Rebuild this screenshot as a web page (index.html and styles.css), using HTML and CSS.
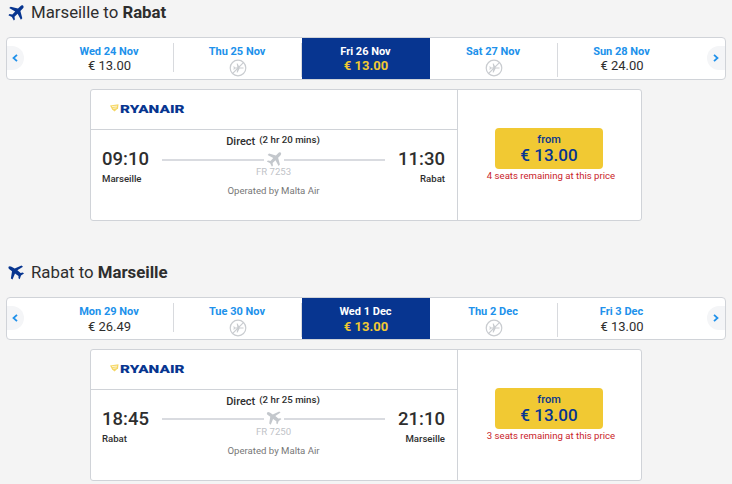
FILE: index.html
```html
<!DOCTYPE html>
<html lang="en">
<head>
    <meta charset="UTF-8">
    <meta name="viewport" content="width=device-width, initial-scale=1.0">
    <title>Select your flights</title>
    <link rel="stylesheet" href="styles.css">
</head>
<body>
    <!-- Shared icons -->
    <svg class="sprite" width="0" height="0">
        <symbol id="plane-out" viewBox="0 0 16 16">
            <path d="M15.200.8c-.8-.8-2-.4-2.800.4L10 3.600 2.700 1.700 1.200 3.100 7.200 6.400 4.300 9.500 1.500 9.100.4 10.200 3.900 12 5.800 15.600 6.900 14.500 6.500 11.700 9.600 8.800 12.900 14.800 14.300 13.300 12.400 6 14.800 3.600C15.600 2.800 16 1.600 15.200.8z"/>
        </symbol>
        <symbol id="plane-back" viewBox="0 0 16 16">
            <path d="M.6 1.800C1.100.9 2.400 1 3.500 1.700L6.700 3.600 13.500.5 15 1.700 9.400 5.300 12.600 8.100 14.800 7.600 16 8.500 13 10.600 11.700 14.200 10.500 13.300 10.500 11 7 8.600 4.500 14.600 2.900 13.400 4 6.200 1.400 4.300C.5 3.500.2 2.600.6 1.800z"/>
        </symbol>
        <symbol id="no-flight" viewBox="0 0 18 18">
            <g fill="none" stroke="#c9ccd0" stroke-width="1.200">
                <circle cx="9" cy="9" r="7.800"/>
                <path d="M3.700 14.400 14.400 3.700"/>
            </g>
            <path fill="#c9ccd0" d="M14.500 8.500 10.600 8.400 8.600 4.600 7.700 4.600 8.400 8.400 6 8.400 5 7.300 4.400 7.300 4.800 9 4.400 10.700 5 10.700 6 9.600 8.400 9.600 7.700 13.400 8.600 13.400 10.600 9.600 14.500 9.500z"/>
        </symbol>
        <symbol id="chevron" viewBox="0 0 6 8">
            <path d="M1 .8 4.500 4 1 7.200" fill="none" stroke="#2091eb" stroke-width="1.800"/>
        </symbol>
    </svg>

    <section class="journey">
        <h1 class="title">
            <svg class="title-icon"><use href="#plane-out"/></svg>
            <span>Marseille to <b>Rabat</b></span>
        </h1>
        <div class="dates">
            <button class="arrow prev"><svg><use href="#chevron"/></svg></button>
            <div class="date divider"><span class="day">Wed 24 Nov</span><span class="price">€ 13.00</span></div>
            <div class="date divider"><span class="day">Thu 25 Nov</span><svg class="none"><use href="#no-flight"/></svg></div>
            <div class="date selected"><span class="day">Fri 26 Nov</span><span class="price">€ 13.00</span></div>
            <div class="date divider"><span class="day">Sat 27 Nov</span><svg class="none"><use href="#no-flight"/></svg></div>
            <div class="date"><span class="day">Sun 28 Nov</span><span class="price">€ 24.00</span></div>
            <button class="arrow next"><svg><use href="#chevron"/></svg></button>
        </div>
        <div class="card">
            <div class="flight">
                <div class="carrier">
                    <svg class="logo" viewBox="0 0 76 12">
                        <path d="M0 2.500 8.500 1.300 8 5.300 4.500 8.500 2 6.200z" fill="#f1c933" opacity=".75"/>
                        <path d="M2 3.600 7 3.200M3.200 5.400 6.500 4.800" stroke="#fff" stroke-width=".7"/>
                        <text class="logo-text" x="10" y="10" textLength="64.500" lengthAdjust="spacingAndGlyphs">RYANAIR</text>
                    </svg>
                </div>
                <div class="details">
                    <div class="stop"><span class="time">09:10</span><span class="city">Marseille</span></div>
                    <div class="route">
                        <div class="duration"><span>Direct</span><small>(2 hr 20 mins)</small></div>
                        <div class="line"><svg><use href="#plane-out"/></svg></div>
                        <div class="number">FR 7253</div>
                        <div class="operator">Operated by Malta Air</div>
                    </div>
                    <div class="stop arrival"><span class="time">11:30</span><span class="city">Rabat</span></div>
                </div>
            </div>
            <div class="fare">
                <button class="buy"><span class="from">from</span><span class="amount">€ 13.00</span></button>
                <div class="seats">4 seats remaining at this price</div>
            </div>
        </div>
    </section>

    <section class="journey">
        <h1 class="title">
            <svg class="title-icon"><use href="#plane-back"/></svg>
            <span>Rabat to <b>Marseille</b></span>
        </h1>
        <div class="dates inbound">
            <button class="arrow prev"><svg><use href="#chevron"/></svg></button>
            <div class="date divider"><span class="day">Mon 29 Nov</span><span class="price">€ 26.49</span></div>
            <div class="date divider"><span class="day">Tue 30 Nov</span><svg class="none"><use href="#no-flight"/></svg></div>
            <div class="date selected"><span class="day">Wed 1 Dec</span><span class="price">€ 13.00</span></div>
            <div class="date divider"><span class="day">Thu 2 Dec</span><svg class="none"><use href="#no-flight"/></svg></div>
            <div class="date"><span class="day">Fri 3 Dec</span><span class="price">€ 13.00</span></div>
            <button class="arrow next"><svg><use href="#chevron"/></svg></button>
        </div>
        <div class="card">
            <div class="flight">
                <div class="carrier">
                    <svg class="logo" viewBox="0 0 76 12">
                        <path d="M0 2.500 8.500 1.300 8 5.300 4.500 8.500 2 6.200z" fill="#f1c933" opacity=".75"/>
                        <path d="M2 3.600 7 3.200M3.200 5.400 6.500 4.800" stroke="#fff" stroke-width=".7"/>
                        <text class="logo-text" x="10" y="10" textLength="64.500" lengthAdjust="spacingAndGlyphs">RYANAIR</text>
                    </svg>
                </div>
                <div class="details">
                    <div class="stop"><span class="time">18:45</span><span class="city">Rabat</span></div>
                    <div class="route">
                        <div class="duration"><span>Direct</span><small>(2 hr 25 mins)</small></div>
                        <div class="line back"><svg><use href="#plane-back"/></svg></div>
                        <div class="number">FR 7250</div>
                        <div class="operator">Operated by Malta Air</div>
                    </div>
                    <div class="stop arrival"><span class="time">21:10</span><span class="city">Marseille</span></div>
                </div>
            </div>
            <div class="fare">
                <button class="buy"><span class="from">from</span><span class="amount">€ 13.00</span></button>
                <div class="seats">3 seats remaining at this price</div>
            </div>
        </div>
    </section>
</body>
</html>
```
FILE: styles.css
```css
* {
    box-sizing: border-box;
}

body {
    margin: 0;
    background-color: #f4f4f4;
    color: #2e2e2e;
    font-family: Roboto, Arial, sans-serif;
}

button {
    border: none;
    padding: 0;
    font-family: inherit;
}

.sprite {
    display: block;
}

.journey {
    height: 260px;
    padding: 0 6px;
}

.journey:last-child {
    height: auto;
}

.title {
    display: flex;
    align-items: center;
    gap: 7px;
    height: 37px;
    margin: 0;
    padding: 0 0 12px 2px;
    font-size: 16.8px;
    font-weight: 400;
}

.title span {
    padding-bottom: 2px;
}

.title b {
    font-weight: 700;
}

.title-icon {
    width: 16px;
    height: 16px;
    fill: #073590;
}

/* Date carousel */
.dates {
    display: flex;
    justify-content: space-between;
    width: 720px;
    height: 43px;
    background-color: #fff;
    border: 1px solid #d0d3d8;
    border-radius: 4px;
}

.arrow {
    display: flex;
    align-items: center;
    width: 17px;
    height: 24px;
    margin-top: 8px;
    padding-bottom: 1px;
    background-color: #f4f5f7;
    border-radius: 0 12px 12px 0;
}

.arrow svg {
    width: 6px;
    height: 8px;
    margin-left: 5px;
}

.prev {
    margin-right: 22px;
}

.prev svg {
    transform: scaleX(-1);
}

.next {
    width: 18px;
    margin-left: 21px;
    border-radius: 12px 0 0 12px;
}

.next svg {
    margin-left: 6px;
}

.date {
    display: flex;
    flex-direction: column;
    align-items: center;
    align-self: flex-start;
    width: 128px;
    margin-top: 5px;
    text-align: center;
}

.divider {
    border-right: 1px solid #d8dade;
}

.day {
    height: 16px;
    padding-right: 1px;
    line-height: 17px;
    font-size: 11px;
    font-weight: 700;
    color: #2091eb;
}

.price {
    height: 13px;
    line-height: 14px;
    font-size: 13px;
}

.inbound .price {
    line-height: 15px;
}

.none {
    width: 18px;
    height: 18px;
}

.selected {
    height: 41px;
    margin-top: 0;
    padding-top: 5px;
    background-color: #073590;
}

.selected .day {
    color: #fff;
}

.selected .price {
    color: #f1c933;
    font-weight: 700;
}

/* Flight card */
.card {
    display: flex;
    width: 552px;
    height: 132px;
    margin: 9px 0 0 84px;
    background-color: #fff;
    border: 1px solid #d0d3d8;
    border-radius: 3px;
}

.flight {
    width: 367px;
    border-right: 1px solid #d0d3d8;
}

.carrier {
    height: 40px;
    padding: 13px 0 0 19px;
    border-bottom: 1px solid #d0d3d8;
}

.logo {
    display: block;
    width: 76px;
    height: 12px;
}

.logo-text {
    font-family: Roboto, Arial, sans-serif;
    font-size: 11px;
    font-weight: 900;
    fill: #073590;
}

.details {
    display: flex;
    padding: 0 12px 0 11px;
}

.stop {
    display: flex;
    flex-direction: column;
    width: 60px;
    padding-top: 19px;
}

.arrival {
    text-align: right;
}

.time {
    line-height: 21px;
    font-size: 18.5px;
    font-weight: 500;
}

.city {
    line-height: 18px;
    font-size: 9.6px;
    font-weight: 500;
}

.route {
    width: 223px;
    padding-top: 3px;
    text-align: center;
}

.duration {
    display: flex;
    justify-content: center;
    gap: 4px;
    height: 16px;
    padding-right: 1px;
    line-height: 17px;
    font-size: 11px;
    font-weight: 500;
}

.duration small {
    line-height: 14px;
    font-size: 9.7px;
}

.line {
    display: flex;
    align-items: center;
    gap: 2px;
    height: 22px;
}

.line::before,
.line::after {
    content: "";
    flex: 1;
    height: 2px;
    background-color: #d9dbe0;
}

.line svg {
    width: 16px;
    height: 15px;
    margin-bottom: 2px;
    fill: #c3c7cc;
}

.back {
    padding-bottom: 2px;
}

.number {
    height: 11px;
    line-height: 2px;
    font-size: 9.6px;
    color: #bfc3c8;
}

.operator {
    line-height: 18px;
    font-size: 9.6px;
    color: #777;
}

/* Price */
.fare {
    flex: 1;
    display: flex;
    flex-direction: column;
    align-items: center;
    padding: 38px 2px 0 0;
}

.buy {
    display: flex;
    flex-direction: column;
    align-items: center;
    width: 108px;
    height: 41px;
    padding: 5px 0 0 1px;
    background-color: #f1c933;
    border-radius: 4px;
    color: #073590;
    font-weight: 500;
}

.from {
    line-height: 14px;
    font-size: 11px;
}

.amount {
    line-height: 17px;
    font-size: 17px;
}

.seats {
    padding-left: 5px;
    line-height: 14px;
    font-size: 9.6px;
    color: #c9242b;
}
```
